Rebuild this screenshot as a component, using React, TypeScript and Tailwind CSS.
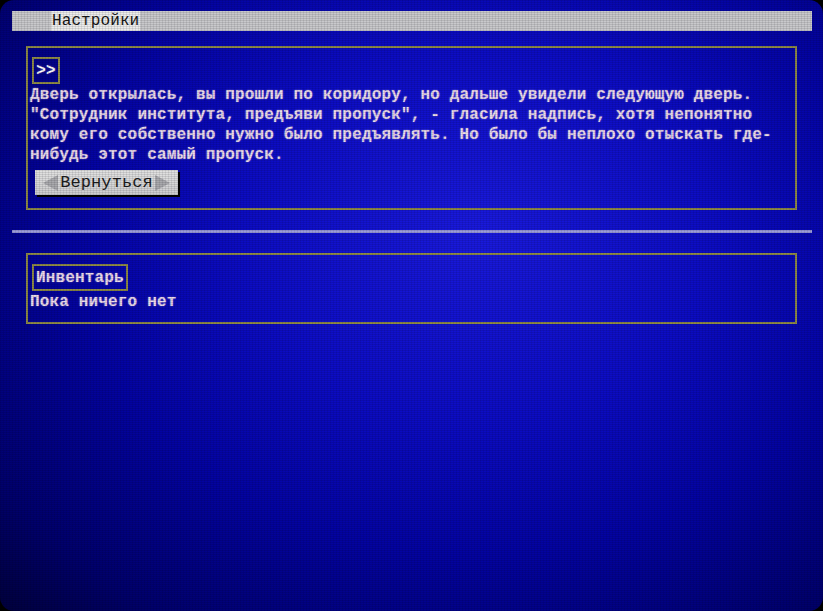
import React from "react";

const mono = { fontFamily: '"Liberation Mono", "DejaVu Sans Mono", monospace' };

const story =
  'Дверь открылась, вы прошли по коридору, но дальше увидели следующую дверь. "Сотрудник института, предъяви пропуск", - гласила надпись, хотя непонятно кому его собственно нужно было предъявлять. Но было бы неплохо отыскать где-нибудь этот самый пропуск.';

const Triangle = ({ dir }: { dir: "left" | "right" }) => (
  <svg width="15" height="16" viewBox="0 0 15 16" className="shrink-0">
    <polygon
      points={dir === "left" ? "0,8 15,0 15,16" : "15,8 0,0 0,16"}
      fill="#a9a9ad"
    />
  </svg>
);

export default function App() {
  return (
    <div className="w-[823px] h-[611px] bg-black overflow-hidden" style={mono}>
      <div className="relative w-full h-full rounded-[14px] overflow-hidden bg-[radial-gradient(ellipse_at_58%_38%,#1a1ade_0%,#0c0cc4_35%,#0303a2_60%,#00006c_85%,#00003c_100%)] pl-[12px] pr-[11px] pt-[11px]">
        {/* title bar */}
        <div className="h-[20px] bg-[#c9c9cc] flex items-center pl-[39px]">
          <span className="h-full px-[1px] bg-[#ececec] text-[#151515] text-[16px] leading-[20px] tracking-[0.1px]">
            Настройки
          </span>
        </div>

        {/* story panel */}
        <div className="mt-[15px] ml-[14px] mr-[15px] border-2 border-[#8f8b48] pl-[2px] pt-[9px] pb-[13px] text-[#ecdcec] text-[16px] leading-[20px] font-bold tracking-[0.16px] [text-shadow:0_0_2px_rgba(230,210,240,0.45)]">
          <div className="w-[28px] h-[27px] ml-[2px] border-2 border-[#8f8b48] flex items-center justify-center text-white leading-none">
            &gt;&gt;
          </div>
          <p className="mt-[1px] pr-[2px]">{story}</p>
          <button className="mt-[5px] ml-[5px] w-[143px] h-[25px] bg-[linear-gradient(#e2e2e2,#cdcdcf)] shadow-[2px_2px_0_#000] flex items-center justify-between px-[8px] text-[#1c1c1c] font-normal [text-shadow:none]">
            <Triangle dir="left" />
            <span className="text-[17px] leading-none tracking-[0.1px]">Вернуться</span>
            <Triangle dir="right" />
          </button>
        </div>

        {/* divider */}
        <div className="mt-[20px] h-[3px] bg-[#9c9cdc]" />

        {/* inventory panel */}
        <div className="mt-[20px] ml-[14px] mr-[15px] border-2 border-[#8f8b48] pl-[2px] pt-[9px] pb-[10px] text-[#ecdcec] text-[16px] leading-[20px] font-bold tracking-[0.16px] [text-shadow:0_0_2px_rgba(230,210,240,0.45)]">
          <div className="inline-flex h-[27px] ml-[2px] px-[2px] border-2 border-[#8f8b48] items-center">
            Инвентарь
          </div>
          <p className="mt-[1px]">Пока ничего нет</p>
        </div>

        {/* scanlines overlay */}
        <div className="pointer-events-none absolute inset-0 bg-[repeating-linear-gradient(0deg,rgba(0,0,0,0.10)_0px,rgba(0,0,0,0.10)_1px,transparent_1px,transparent_2px)]" />
        <div className="pointer-events-none absolute inset-0 bg-[repeating-linear-gradient(90deg,rgba(0,0,0,0.08)_0px,rgba(0,0,0,0.08)_1px,transparent_1px,transparent_3px)]" />
      </div>
    </div>
  );
}
